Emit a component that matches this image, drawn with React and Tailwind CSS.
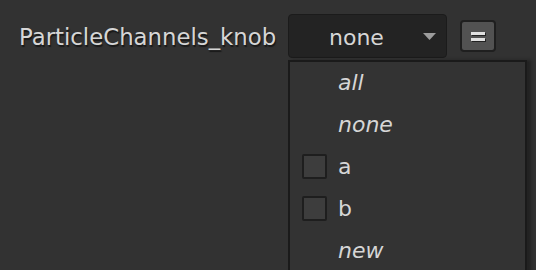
import React from "react";

const items = [
  { label: "all", italic: true },
  { label: "none", italic: true },
  { label: "a", check: true },
  { label: "b", check: true },
  { label: "new", italic: true },
];

function MenuItem({ label, italic, check }) {
  return (
    <div className="flex h-[42px] items-center">
      <div className="w-[48px] pl-[12px]">
        {check && (
          <div className="h-[25px] w-[25px] rounded-[2px] border-2 border-[#1e1e1e] bg-[#3d3d3d]" />
        )}
      </div>
      <span className={italic ? "italic" : ""}>{label}</span>
    </div>
  );
}

export default function App() {
  return (
    <div
      className="h-[270px] w-[536px] overflow-hidden bg-[#323232] pl-[19px] pt-[14px] text-[22px] text-[#d6d6d6]"
      style={{ fontFamily: '"DejaVu Sans", Verdana, sans-serif' }}
    >
      <div className="flex items-center">
        <span className="w-[269px] pt-[3px] text-[22.8px] [text-shadow:1px_2px_1px_#181818]">
          ParticleChannels_knob
        </span>
        <div className="relative">
          <div className="flex h-[44px] w-[159px] items-center rounded-[4px] border border-[#1b1b1b] bg-[#232323]">
            <span className="pl-[40px] pt-[3px]">none</span>
            <svg className="ml-auto mr-[10px]" width="13" height="7" viewBox="0 0 13 7">
              <path d="M0 0 L13 0 L6.5 7 Z" fill="#9c9c9c" />
            </svg>
          </div>
          <div className="absolute left-0 top-[46px] h-[240px] w-[239px] border-2 border-[#1a1a1a] bg-[#333333] shadow-[4px_0_3px_#222]">
            <div className="-mt-[1px]">
              {items.map((it) => (
                <MenuItem key={it.label} {...it} />
              ))}
            </div>
          </div>
        </div>
        <div className="ml-[13px] flex h-[32px] w-[36px] flex-col items-center justify-center gap-[3px] rounded-[4px] border-2 border-[#1f1f1f] bg-[#525252]">
          <div className="h-[3px] w-[14px] bg-[#e0e0e0] shadow-[1px_1px_0_#222]" />
          <div className="h-[3px] w-[14px] bg-[#e0e0e0] shadow-[1px_1px_0_#222]" />
        </div>
      </div>
    </div>
  );
}
